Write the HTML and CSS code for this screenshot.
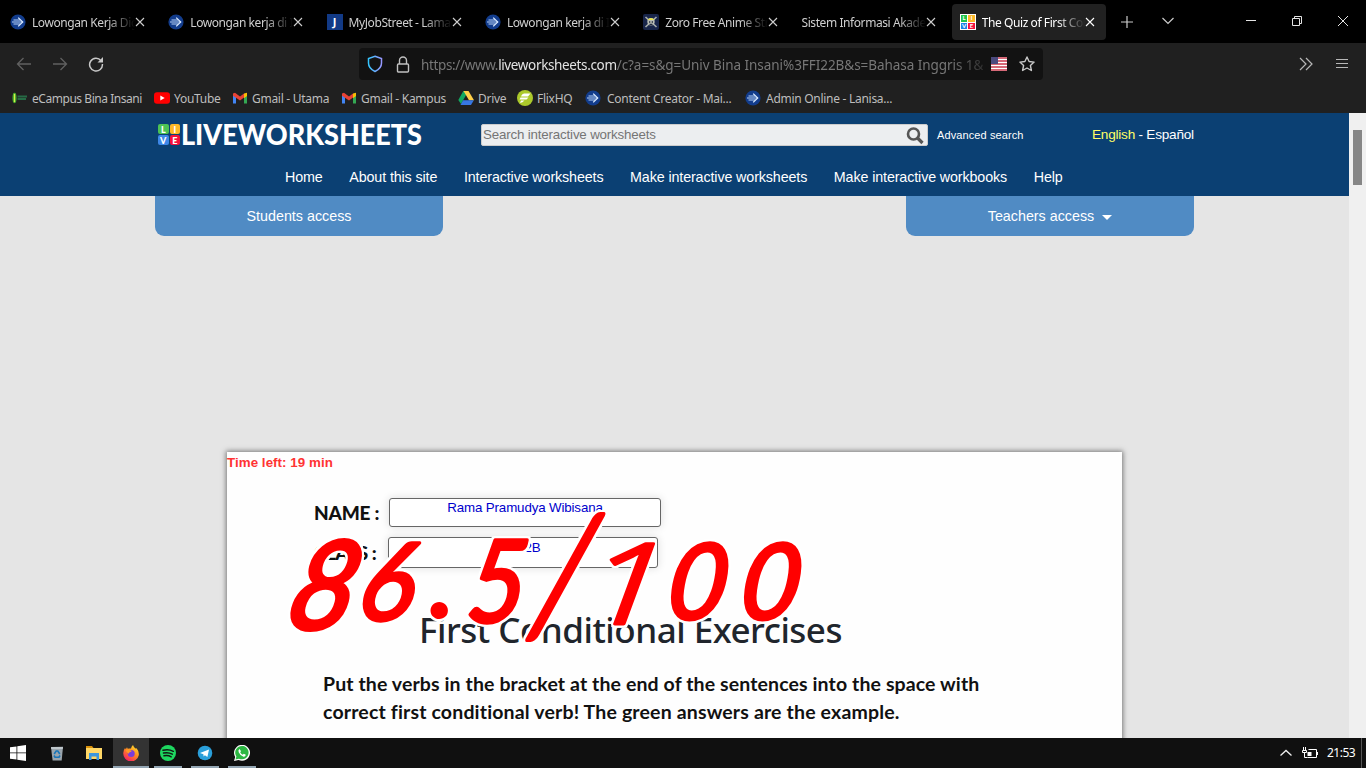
FILE: index.html
```html
<!DOCTYPE html>
<html lang="en">
<head>
<meta charset="utf-8">
<title>The Quiz of First Conditional</title>
<link rel="stylesheet" href="styles.css">
</head>
<body>
<svg class="defs" width="0" height="0">
  <symbol id="jobs" viewBox="0 0 16 16"><circle cx="8" cy="8" r="7.6" fill="#123c8c"/><path d="M2 8h11M3.500 6H10M3.500 10H10" fill="none" stroke="#b9d4fa" stroke-width="1"/><path d="M8.200 3.600 12.700 8l-4.500 4.400" fill="none" stroke="#d8e8ff" stroke-width="1.300"/></symbol>
  <symbol id="close" viewBox="0 0 10 10"><path d="m1 1 8 8M9 1 1 9" fill="none" stroke="currentColor" stroke-width="1.1"/></symbol>
  <symbol id="gmail" viewBox="0 0 16 12"><path d="M1 2v9.5h3V5z" fill="#4285f4"/><path d="M15 2v9.5h-3V5z" fill="#34a853"/><path d="M12 1.5 15 .8V4l-3 2.3z" fill="#fbbc04"/><path d="M1 1.5 3 .8 8 4.6l4-3.1v4L8 8.5 1 3.8z" fill="#ea4335"/></symbol>
</svg>
<div class="screen">
  <div class="tabs">
    <div class="tab"><svg class="fav"><use href="#jobs"/></svg><span class="label">Lowongan Kerja Digi</span><svg class="x"><use href="#close"/></svg></div>
    <div class="tab"><svg class="fav"><use href="#jobs"/></svg><span class="label">Lowongan kerja di In</span><svg class="x"><use href="#close"/></svg></div>
    <div class="tab"><span class="fav jfav">J</span><span class="label">MyJobStreet - Lamar</span><svg class="x"><use href="#close"/></svg></div>
    <div class="tab"><svg class="fav"><use href="#jobs"/></svg><span class="label">Lowongan kerja di In</span><svg class="x"><use href="#close"/></svg></div>
    <div class="tab"><svg class="fav" viewBox="0 0 16 16"><rect width="16" height="16" rx="2" fill="#18254a"/><path d="m2.500 3 11 10M13.500 3l-11 10" stroke="#a9b0ae" stroke-width="1.6"/><circle cx="8" cy="7.800" r="3.700" fill="#b9bdb4"/><path d="M4.500 6q3.500-4 7 0z" fill="#e8e34b"/><path d="M6 8h1.300M8.700 8H10M6.500 10.500h3" stroke="#222b40" stroke-width="1.300"/></svg><span class="label">Zoro Free Anime Str</span><svg class="x"><use href="#close"/></svg></div>
    <div class="tab"><span class="label">Sistem Informasi Akadem</span><svg class="x"><use href="#close"/></svg></div>
    <div class="tab active"><span class="fav live"><i>L</i><i>I</i><i>V</i><i>E</i></span><span class="label">The Quiz of First Con</span><svg class="x"><use href="#close"/></svg></div>
    <svg class="newtab" viewBox="0 0 12 12"><path d="M6 0v12M0 6h12" stroke="#ccc" stroke-width="1.200"/></svg>
    <svg class="alltabs" viewBox="0 0 12 8" fill="none"><path d="m.5 1 5.500 5.500L11.500 1" stroke="#ccc" stroke-width="1.200"/></svg>
    <svg class="winctl" viewBox="0 0 104 12" fill="none" stroke="#e4e4e4"><path d="M1 5.500h10M47.500 3.500h7v7h-7zM49.500 3.500v-2h7v7h-2M93 1l10 10M103 1 93 11"/></svg>
  </div>

  <div class="toolbar">
    <svg class="nav" viewBox="0 0 88 16" fill="none" stroke-width="1.300"><path d="M15 8H1.500M7.500 2l-6 6 6 6M37 8h13.500M44.500 2l6 6-6 6" stroke="#606060"/><path d="M85 4.600A6.400 6.400 0 1 0 86.400 8" stroke="#c8c8c8" stroke-width="1.500"/><path d="M87 1v5.500h-5.500z" fill="#c8c8c8"/></svg>
    <div class="urlbar">
      <svg class="shield" viewBox="0 0 16 18" fill="none"><defs><linearGradient id="sg" x2="1" y2="0"><stop stop-color="#34c6ff"/><stop offset="1" stop-color="#9797ff"/></linearGradient></defs><path d="M8 1.200 14.500 3.500V8q0 5.500-6.500 8.500Q1.500 13.500 1.500 8V3.500z" stroke="url(#sg)" stroke-width="1.500"/></svg>
      <svg class="lock" viewBox="0 0 14 17" fill="none" stroke="#c0c0c0" stroke-width="1.400"><rect x="1.500" y="8" width="11" height="8" rx="1"/><path d="M3.500 8V4.500a3.500 3.500 0 0 1 7 0V8"/></svg>
      <span class="url">https://www.<b>liveworksheets.com</b><span class="path">/c?a=s&amp;g=Univ Bina Insani%3FFI22B&amp;s=Bahasa Inggris 1&amp;</span></span>
      <svg class="flag" viewBox="0 0 16 14"><path fill="#fff" d="M0 0h16v14H0z"/><path d="M0 1h16M0 4h16M0 7h16M0 10h16M0 13h16" stroke="#c8374b" stroke-width="1.700"/><path fill="#4b4a7e" d="M0 0h7v7H0z"/></svg>
      <svg class="star" viewBox="0 0 16 16" fill="none" stroke="#c8c8c8" stroke-width="1.400" stroke-linejoin="round"><path d="m8 1 2.100 4.500 5 .6-3.700 3.400 1 5L8 12l-4.400 2.500 1-5L.9 6.100l5-.6z"/></svg>
    </div>
    <svg class="menus" viewBox="0 0 50 14" fill="none" stroke="#b8b8b8" stroke-width="1.200"><path d="m1 1 6 6-6 6M7 1l6 6-6 6"/><path d="M37 2.500h12M37 6.500h12M37 10.500h12" stroke-width="1"/></svg>
  </div>

  <div class="bookmarks">
    <a class="b1"><svg width="16" height="16" viewBox="0 0 16 16"><ellipse cx="2.500" cy="8" rx="2" ry="5.200" fill="#4fb52e"/><path d="M2.500 4v8" stroke="#d9e84a"/><path d="M5.500 6.500h9.500M5.500 9H14" stroke="#266b45" stroke-width="1.800"/></svg><span>eCampus Bina Insani</span></a>
    <a class="b2"><svg width="16" height="16" viewBox="0 0 16 16"><rect y="2.300" width="16" height="11.500" rx="3" fill="#f00"/><path d="m6.300 5.500 4.400 2.500-4.400 2.500z" fill="#fff"/></svg><span>YouTube</span></a>
    <a class="b3"><svg width="16" height="12"><use href="#gmail"/></svg><span>Gmail - Utama</span></a>
    <a class="b4"><svg width="16" height="12"><use href="#gmail"/></svg><span>Gmail - Kampus</span></a>
    <a class="b5"><svg width="16" height="14" viewBox="0 0 16 14"><path d="M5.300 0h5L3 13 .3 9z" fill="#11a861"/><path d="M5.500 0h5L16 9.300h-5z" fill="#ffcf48"/><path d="M5 9.300h10.800L13 14H2.500z" fill="#3777e3"/></svg><span>Drive</span></a>
    <a class="b6"><svg width="16" height="16" viewBox="0 0 16 16"><circle cx="8" cy="8" r="8" fill="#acc92b"/><path d="M13.500 3.500H7Q4.600 4 4 6.500h7zM11.500 7.500h-8L2.500 9.500h7zM7.500 10.500H4l-1 2.500q2.500-.2 4.500-2.500z" fill="#fff"/></svg><span>FlixHQ</span></a>
    <a class="b7"><svg width="16" height="16"><use href="#jobs"/></svg><span>Content Creator - Mai...</span></a>
    <a class="b8"><svg width="16" height="16"><use href="#jobs"/></svg><span>Admin Online - Lanisa...</span></a>
  </div>

  <div class="viewport">
    <div class="page">
      <header class="site">
        <div class="top">
          <span class="live logo"><i>L</i><i>I</i><i>V</i><i>E</i></span>
          <svg class="brand" width="244" height="26"><text x="0" y="22" textLength="241" lengthAdjust="spacingAndGlyphs">LIVEWORKSHEETS</text></svg>
          <div class="search"><span>Search interactive worksheets</span><svg width="18" height="18" viewBox="0 0 18 18" fill="none" stroke="#555"><circle cx="7.500" cy="7" r="5.500" stroke-width="2.600"/><path d="m11.500 11 5 5" stroke-width="3.200"/></svg></div>
          <a class="adv">Advanced search</a>
          <div class="lang"><em>English</em> - Español</div>
        </div>
        <nav class="main"><a>Home</a><a>About this site</a><a>Interactive worksheets</a><a>Make interactive worksheets</a><a>Make interactive workbooks</a><a>Help</a></nav>
      </header>
      <div class="access"><a>Students access</a><a>Teachers access<i class="caret"></i></a></div>
      <main class="sheet">
        <div class="timer">Time left: 19 min</div>
        <div class="field name"><b>NAME :</b><span class="box">Rama Pramudya Wibisana</span></div>
        <div class="field class"><b>CLASS :</b><span class="box">FI22B</span></div>
        <h1>First Conditional Exercises</h1>
        <p class="l1">Put the verbs in the bracket at the end of the sentences into the space with</p>
        <p class="l2">correct first conditional verb! The green answers are the example.</p>
        <svg class="score" width="540" height="150" viewBox="280 500 540 150">
          <text transform="translate(282 629) skewX(-14) scale(.98 1.040)">8</text>
          <text transform="translate(355 620) skewX(-10) scale(.88 .910)">6</text>
          <text transform="translate(431 617) scale(.75)" class="dot">.</text>
          <text transform="translate(465 622) skewX(-6) scale(.86 .970)">5</text>
          <text transform="translate(530 632) skewX(-13) scale(.9 1.370)">/</text>
          <text transform="translate(583 624) skewX(-5) scale(1.280 .970)" class="one">1</text>
          <text transform="translate(664 619) skewX(-8) scale(.87 .890)">0</text>
          <text transform="translate(737 619) skewX(-8) scale(.87 .890)">0</text>
        </svg>
      </main>
    </div>
    <div class="scroll"><i></i></div>
  </div>

  <footer class="taskbar">
    <div class="app start"><svg viewBox="0 0 16 16"><path d="M0 2.300 6.500 1.400v6.100H0zM7.300 1.200 16 0v7.500H7.300zM0 8.300h6.500v6.200L0 13.700zM7.300 8.300H16V16l-8.700-1.200z" fill="#fff"/></svg></div>
    <div class="app"><svg viewBox="0 0 16 16"><path d="m2 2 12-.2L12.700 15.500H3.600z" fill="#9aa5ad"/><path d="M2 2h12l-.3 2H2.200z" fill="#bfc7cc"/><path d="m5.200 9 2-3h1.600l2 3M11 10.500l-1 1.700H6l-1-1.700" fill="none" stroke="#1976b9" stroke-width="1.600"/></svg></div>
    <div class="app"><svg viewBox="0 0 16 16"><path d="M0 1h6l1.500 2H0z" fill="#d9910b"/><path d="M0 3h16v11H0z" fill="#ffd766"/><path d="M3 8h10v7h-2.500v-3.500h-5V15H3z" fill="#3c96dc"/></svg></div>
    <div class="app on focus"><svg viewBox="0 0 16 16"><defs><linearGradient id="ff" x1=".8" y1="0" x2=".2" y2="1"><stop stop-color="#ffe32e"/><stop offset=".45" stop-color="#ff8a1f"/><stop offset="1" stop-color="#f5156c"/></linearGradient></defs><path d="M10 0q.6 2 2.500 3.600Q13.800 3.500 13.500 3q3 4 2.200 7.400A7.800 7.800 0 0 1 .3 8.500Q.1 5.500 2 3l.8 1.200L4 2.200l.7 1.600Q6 3.300 8 3.600 8.200 1.500 10 0z" fill="url(#ff)"/><circle cx="8.200" cy="8.600" r="3.500" fill="#7a3cdb"/><path d="M3 5q2-1 4 .3l1.800.5Q8.500 7.200 6.500 7.300L5.600 8.700Q3.200 8 3 5z" fill="#ff9a27"/></svg></div>
    <div class="app on"><svg viewBox="0 0 16 16"><circle cx="8" cy="8" r="8" fill="#1ed760"/><path d="M3 5.300q5.500-1.500 10.300 1M3.500 8.100q4.700-1.200 8.800 1.100M4 10.800q4-.9 7.200 1" fill="none" stroke="#101a13" stroke-width="1.500" stroke-linecap="round"/></svg></div>
    <div class="app on"><svg viewBox="0 0 16 16"><circle cx="8" cy="8" r="7.300" fill="#2a9fda"/><path d="m3 7.900 9-3.500-1.600 7.700-2.500-1.800-1.300 1.300-.2-2.400z" fill="#fff"/></svg></div>
    <div class="app on"><svg viewBox="0 0 16 16"><path d="M0 16 1.200 12A8 8 0 1 1 4.500 15z" fill="#fff"/><path d="m1.500 14.500.9-3A6.700 6.700 0 1 1 5 13.700z" fill="#2cb742"/><path d="M5.700 4q-2 1-1 3.200 1.600 3.600 4.800 4.600 2 .2 2.300-2L9.800 8.700 8.700 9.800Q7 9 6.200 7.300l.8-1.100z" fill="#fff"/></svg></div>
    <div class="tray">
      <svg width="12" height="8" viewBox="0 0 12 8" fill="none"><path d="m.5 6.500 5.500-5 5.500 5" stroke="#eee" stroke-width="1.300"/></svg>
      <svg class="batt" width="16" height="12" viewBox="0 0 16 12" fill="none" stroke="#fff"><path d="M6.500 2.500h8v8h-8M5.500 10.500h2M15.500 5v3M1.500 0v3M3.500 0v3M.5 3.500h4v2h-4zM2.500 6v4.500h3"/><path d="M5.500 5h4v4h-4z" fill="#fff" stroke="none"/></svg>
      <span class="clock">21:53</span>
    </div>
  </footer>
</div>
</body>
</html>
```
FILE: styles.css
```css
* { box-sizing: border-box; }
body { margin: 0; overflow: hidden; font-family: "Liberation Sans", Arial, sans-serif; }
.defs { position: absolute; }
svg { flex: none; display: block; }
i, em { font-style: normal; }
.screen { width: 1366px; height: 768px; display: flex; flex-direction: column; background: #202020; }

.tabs, .toolbar, .bookmarks { font-family: "Noto Sans", "Open Sans", sans-serif; }
.tabs { height: 43px; background: #000; display: flex; align-items: center; padding: 0 0 1px 2px; flex: none; }
.tab { width: 154px; margin-right: 4.300px; height: 36px; padding: 0 11px 0 8px; display: flex; align-items: center; color: #cfcfcf; border-radius: 4px; flex: none; margin-top: 2px; }
.fav { width: 16px; height: 16px; flex: none; margin-right: 6px; }
.label { flex: 1; min-width: 0; overflow: hidden; white-space: nowrap; font-size: 12px; letter-spacing: -.42px; line-height: 18px; padding-top: 1px; -webkit-mask-image: linear-gradient(90deg, #000 calc(100% - 28px), transparent); mask-image: linear-gradient(90deg, #000 calc(100% - 28px), transparent); }
.x { width: 10px; height: 10px; }
.active { background: #212121; color: #fff; }
.jfav { background: #123a86; color: #fff; font: bold 11px/16px "Noto Sans", sans-serif; text-align: center; }
.live { display: grid; grid-template-columns: 1fr 1fr; grid-template-rows: 1fr 1fr; gap: 1px; }
.live i { display: flex; align-items: center; justify-content: center; color: #fff; font: bold 6px/1 Lato, sans-serif; }
.live i:nth-child(1) { background: #1fc34a; }
.live i:nth-child(2) { background: #fdb827; }
.live i:nth-child(3) { background: #1b83e8; }
.live i:nth-child(4) { background: #f5103c; }
.fav.live { background: #fff; padding: 1px; }
.newtab { width: 12px; height: 12px; margin-left: 11px; margin-top: 2px; }
.alltabs { width: 12px; height: 8px; margin-left: 29px; }
.winctl { width: 104px; height: 12px; margin-left: 71px; }

.toolbar { height: 42px; display: flex; align-items: center; padding-left: 16px; flex: none; }
.nav { width: 88px; height: 16px; }
.urlbar { margin-left: 255px; width: 684px; height: 32px; background: #121212; border-radius: 4px; display: flex; align-items: center; padding-left: 8px; }
.shield { width: 16px; height: 18px; }
.lock { width: 14px; height: 17px; margin-left: 13px; }
.url { width: 562px; margin-left: 11px; overflow: hidden; white-space: nowrap; color: #777; font-size: 13.500px; line-height: 20px; padding-top: 1px; letter-spacing: -.36px; -webkit-mask-image: linear-gradient(90deg, #000 530px, transparent 575px); mask-image: linear-gradient(90deg, #000 530px, transparent 575px); }
.url b { font-weight: 400; color: #e2e2e2; }
.url .path { letter-spacing: -.05px; }
.flag { width: 16px; height: 14px; margin-left: 8px; }
.star { width: 16px; height: 16px; margin-left: 12px; }
.menus { width: 50px; height: 14px; margin-left: 256px; }

.bookmarks { height: 28px; flex: none; display: flex; padding-left: 12px; color: #bdbdbd; font-size: 12px; letter-spacing: -.28px; white-space: nowrap; }
.bookmarks a { display: flex; align-items: center; gap: 4px; height: 26px; flex: none; }
.b1 { width: 142px; letter-spacing: -.46px; } .b2 { width: 78px; } .b3 { width: 109px; } .b4 { width: 117px; } .b5 { width: 59px; } .b6 { width: 68px; } .b7 { width: 160px; }
.bookmarks .b7 { gap: 6px; }
.bookmarks .b8 { gap: 5px; }

.viewport { height: 625px; flex: none; display: flex; overflow: hidden; }
.page { width: 1349px; height: 625px; background: #e5e5e5; overflow: hidden; }
.scroll { width: 17px; background: #f0f0f0; padding: 17px 0 0 4px; }
.scroll i { display: block; width: 9px; height: 55px; background: #868686; }
.site { height: 83px; background: #0b4073; color: #fff; }
.top { display: flex; padding: 11px 0 0 158px; height: 50px; align-items: flex-start; }
.logo { width: 22px; height: 21px; flex: none; }
.logo.live i { border-radius: 2px; font-size: 9px; font-weight: 900; }
.logo.live i:nth-child(1) { background: #4cc254; }
.logo.live i:nth-child(3) { background: #3d87e8; }
.brand { margin: -1px 0 0 1px; }
.brand text { fill: #fff; font: 900 28px Lato, sans-serif; }
.search { margin-left: 56px; width: 447px; height: 22px; background: #eceef0; border: 1px solid #ccc; border-radius: 2px; display: flex; justify-content: space-between; padding: 0 3px 0 1px; align-items: center; color: #757575; font-size: 13.333px; letter-spacing: -.17px; flex: none; }
.search span { margin-top: -2px; }
.search svg { margin-top: 2px; }
.adv { font-size: 11px; margin: 5px 0 0 9px; width: 87px; white-space: nowrap; letter-spacing: .1px; }
.lang { margin: 3px 0 0 68px; font-size: 13.600px; letter-spacing: -.23px; white-space: nowrap; }
.lang em { color: #ffff66; }
.main { display: flex; gap: 26.600px; padding: 5px 0 0 285px; font-size: 14.300px; letter-spacing: -.12px; line-height: 18px; white-space: nowrap; }
.access { display: flex; justify-content: space-between; padding: 0 155px; height: 40px; }
.access a { width: 288px; background: #508bc4; border-radius: 0 0 9px 9px; color: #fff; font-size: 14.300px; display: flex; justify-content: center; align-items: center; }
.caret { border: 5px solid transparent; border-top-color: #fff; border-bottom: 0; margin-left: 8px; margin-top: 3px; }

.sheet { position: relative; margin: 216px 0 0 227px; width: 895px; height: 400px; background: #fefefe; box-shadow: 0 0 5px 1px #777; color: #111; }
.timer { font-size: 13.330px; font-weight: 700; color: #f33; line-height: 16px; padding-top: 3px; height: 46px; letter-spacing: .06px; }
.field { display: flex; font: 700 19px/30px Lato, sans-serif; }
.field b { flex: none; white-space: nowrap; }
.name { height: 39px; padding-left: 87px; }
.name b { width: 75px; letter-spacing: -.2px; }
.class { height: 73px; padding-left: 87px; }
.class b { width: 74px; letter-spacing: -.6px; padding-top: 1px; }
.box { background: #fff; border: 1px solid #666; border-radius: 3px; height: 29px; width: 272px; text-align: center; color: #00c; font: 13.333px/18px "Liberation Sans", sans-serif; letter-spacing: -.14px; box-shadow: 0 0 8px #ddd; }
.class .box { width: 270px; height: 31px; line-height: 19px; }
h1 { margin: 0; padding-left: 192px; font: 500 35px/40px "Noto Sans", sans-serif; letter-spacing: -.5px; height: 60px; white-space: nowrap; color: #20252c; }
p { margin: 0; padding-left: 96px; font: 700 19.500px/28px Lato, sans-serif; white-space: nowrap; font-variant-ligatures: none; }
.l1 { letter-spacing: .11px; }
.l2 { letter-spacing: .16px; }
.score { position: absolute; left: 53px; top: 48px; overflow: visible; filter: drop-shadow(2px 0 0 #fff) drop-shadow(-2px 0 0 #fff) drop-shadow(0 2px 0 #fff) drop-shadow(0 -2px 0 #fff); }
.score text { font: italic 400 118px Lato, sans-serif; fill: #f00; stroke: #f00; stroke-width: 4px; stroke-linejoin: round; }
.score .dot { font-weight: 900; }
.score .one { font: italic 300 116px "Noto Sans", sans-serif; stroke-width: 3px; }

.taskbar { height: 30px; flex: none; background: #101010; display: flex; }
.app { width: 36px; height: 30px; margin-right: 1px; display: flex; justify-content: center; align-items: center; }
.app.start { margin-right: 3px; }
.app svg { width: 16px; height: 16px; }
.app.on { background: linear-gradient(#94a6b4, #94a6b4) bottom / 28px 2px no-repeat; }
.app.focus { background: linear-gradient(#94a6b4, #94a6b4) bottom / 36px 2px no-repeat #333; }
.tray { margin-left: auto; display: flex; align-items: center; color: #fff; border-right: 1px solid #555; margin-right: 4px; padding-right: 6px; }
.batt { margin-left: 10px; }
.clock { font: 12px/16px "Noto Sans", sans-serif; margin-left: 9px; letter-spacing: -.5px; width: 28px; }
```
